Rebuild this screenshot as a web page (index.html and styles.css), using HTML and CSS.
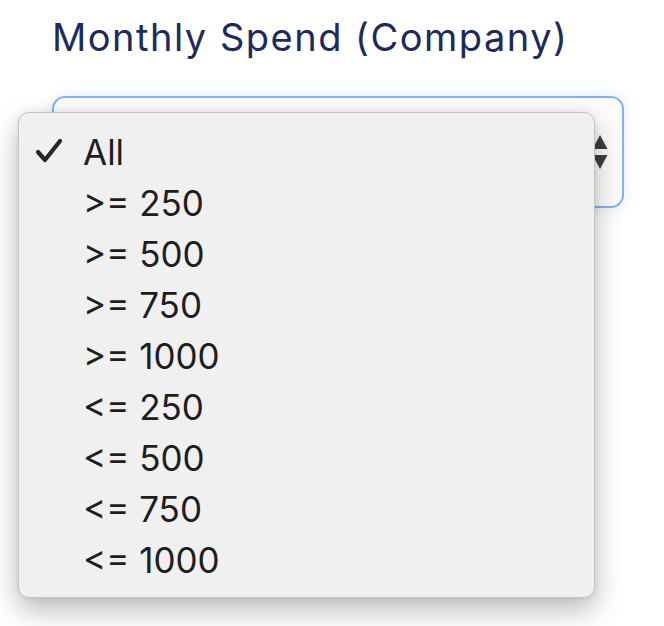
FILE: index.html
```html
<!DOCTYPE html>
<html lang="en">
<head>
<meta charset="utf-8">
<title>Monthly Spend</title>
<link rel="stylesheet" href="styles.css">
</head>
<body>
<div class="page">
  <div class="field">
    <div class="label">Monthly Spend (Company)</div>
    <div class="select-box">
      <svg class="arrows" width="16" height="36" viewBox="0 0 16 36" aria-hidden="true">
        <path d="M8 1 L15.5 15 L0.5 15 Z" fill="#3f3f3f"/>
        <path d="M0.5 21 L15.5 21 L8 35 Z" fill="#3f3f3f"/>
      </svg>
    </div>
  </div>
  <ul class="menu">
    <li class="item selected">
      <svg class="check" width="28" height="26" viewBox="0 0 28 26" aria-hidden="true">
        <path d="M3 14 L10 22 L25 3" fill="none" stroke="#262626" stroke-width="4.2" stroke-linecap="round" stroke-linejoin="round"/>
      </svg>
      <span>All</span>
    </li>
    <li class="item"><span>&gt;= 250</span></li>
    <li class="item"><span>&gt;= 500</span></li>
    <li class="item"><span>&gt;= 750</span></li>
    <li class="item"><span>&gt;= 1000</span></li>
    <li class="item"><span>&lt;= 250</span></li>
    <li class="item"><span>&lt;= 500</span></li>
    <li class="item"><span>&lt;= 750</span></li>
    <li class="item"><span>&lt;= 1000</span></li>
  </ul>
</div>
</body>
</html>
```
FILE: styles.css
```css
html, body {
  margin: 0;
  padding: 0;
  background: #ffffff;
}
.page {
  position: relative;
  width: 664px;
  height: 626px;
  overflow: hidden;
  font-family: "Inter", "Liberation Sans", Arial, sans-serif;
}
.field {
  padding: 15px 0 0 52px;
}
.label {
  font-size: 38px;
  line-height: 44px;
  color: #1d2a5c;
  letter-spacing: 1.5px;
}
.select-box {
  position: relative;
  margin-top: 37px;
  width: 572px;
  height: 112px;
  box-sizing: border-box;
  border: 2px solid #85b0f3;
  border-radius: 13px;
  background: #fcfcfd;
  box-shadow: 0 0 14px rgba(130, 170, 240, 0.25);
  display: flex;
  align-items: center;
  justify-content: flex-end;
  padding-right: 14px;
}
.arrows {
  display: block;
}
.menu {
  position: absolute;
  left: 18px;
  top: 112px;
  width: 575px;
  margin: 0;
  padding: 13px 0 12px;
  list-style: none;
  background: #f0f0f0;
  border: 1px solid #c4c4c4;
  border-radius: 11px;
  box-shadow: 0 12px 28px rgba(0, 0, 0, 0.28), 0 0 6px rgba(0, 0, 0, 0.08);
}
.item {
  position: relative;
  height: 51px;
  display: flex;
  align-items: center;
  padding-left: 64px;
  font-size: 35px;
  color: #1e1e1e;
}
.check {
  position: absolute;
  left: 16px;
  top: 12px;
}
```
